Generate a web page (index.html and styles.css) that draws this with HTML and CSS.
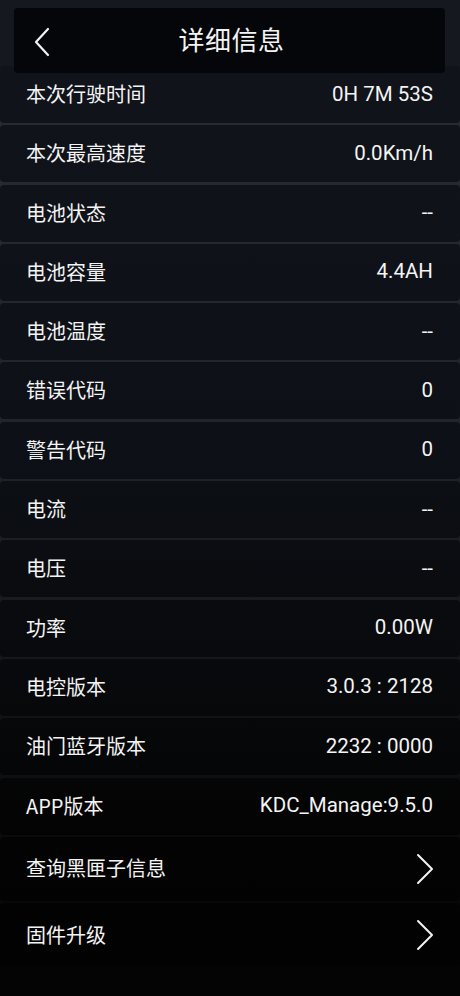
FILE: index.html
```html
<!DOCTYPE html>
<html lang="zh-CN">
<head>
    <meta charset="UTF-8">
    <meta name="viewport" content="width=device-width, initial-scale=1.0">
    <title>详细信息</title>
    <link rel="stylesheet" href="styles.css">
</head>
<body>

    <div class="topbar">
        <a class="back-btn" href="javascript:void(0);">
            <svg width="20" height="30" viewBox="0 0 20 30">
                <path d="M16 2 L4 15 L16 28" fill="none" stroke="#f2f2f2" stroke-width="2.2" stroke-linecap="round" stroke-linejoin="round"/>
            </svg>
        </a>
        <h1>详细信息</h1>
    </div>

    <div class="info-list">
        <div class="info-row"><span class="label">本次行驶时间</span><span class="value">0H 7M 53S</span></div>
        <div class="info-row"><span class="label">本次最高速度</span><span class="value">0.0Km/h</span></div>
        <div class="info-row"><span class="label">电池状态</span><span class="value">--</span></div>
        <div class="info-row"><span class="label">电池容量</span><span class="value">4.4AH</span></div>
        <div class="info-row"><span class="label">电池温度</span><span class="value">--</span></div>
        <div class="info-row"><span class="label">错误代码</span><span class="value">0</span></div>
        <div class="info-row"><span class="label">警告代码</span><span class="value">0</span></div>
        <div class="info-row"><span class="label">电流</span><span class="value">--</span></div>
        <div class="info-row"><span class="label">电压</span><span class="value">--</span></div>
        <div class="info-row"><span class="label">功率</span><span class="value">0.00W</span></div>
        <div class="info-row"><span class="label">电控版本</span><span class="value">3.0.3 : 2128</span></div>
        <div class="info-row"><span class="label">油门蓝牙版本</span><span class="value">2232 : 0000</span></div>
        <div class="info-row"><span class="label">APP版本</span><span class="value">KDC_Manage:9.5.0</span></div>

        <div class="info-row link-row">
            <span class="label">查询黑匣子信息</span>
            <svg class="arrow" width="20" height="32" viewBox="0 0 20 32">
                <path d="M3 2 L17 16 L3 30" fill="none" stroke="#f2f2f2" stroke-width="2" stroke-linecap="round" stroke-linejoin="round"/>
            </svg>
        </div>
        <div class="info-row link-row">
            <span class="label">固件升级</span>
            <svg class="arrow" width="20" height="32" viewBox="0 0 20 32">
                <path d="M3 2 L17 16 L3 30" fill="none" stroke="#f2f2f2" stroke-width="2" stroke-linecap="round" stroke-linejoin="round"/>
            </svg>
        </div>
    </div>

</body>
</html>
```

FILE: styles.css
```css
* {
    margin: 0;
    padding: 0;
    box-sizing: border-box;
}

html,
body {
    height: 100%;
}

body {
    color: #f4f4f4;
    font-family: "Noto Sans CJK SC", Roboto, sans-serif;
    background: linear-gradient(#15181e 0px, #15181e 74px, #272b33 80px, #20242b 45%, #121315 72%, #0b0b0c 84%, #040404 97%);
    background-attachment: fixed;
    position: relative;
    overflow: hidden;
}

/* header floats over the first row */
.topbar {
    position: absolute;
    top: 8px;
    left: 14px;
    width: 431px;
    height: 65px;
    background-color: #050609;
    border-radius: 4px;
    display: flex;
    align-items: center;
    justify-content: center;
    z-index: 2;
}

.back-btn {
    position: absolute;
    left: 18px;
    top: 19px;
    display: block;
    width: 20px;
    height: 30px;
}

.topbar h1 {
    font-size: 26px;
    font-weight: 400;
    letter-spacing: 0.5px;
    margin-left: 4px;
    margin-top: -4px;
}

.info-list {
    padding-top: 66px;
    display: flex;
    flex-direction: column;
    gap: 2.3px;
}

.info-row {
    height: 57px;
    padding: 0 27px 0 26px;
    display: flex;
    align-items: center;
    justify-content: space-between;
    background: linear-gradient(#11141b 0%, #0d1016 45%, #07080a 72%, #030303 84%, #020202 100%);
    background-attachment: fixed;
    border-radius: 4px;
}

.info-row .label {
    font-size: 20px;
    margin-top: -2px;
}

.info-row .value {
    font-family: Roboto, "Noto Sans CJK SC", sans-serif;
    font-size: 20.5px;
    margin-top: -2px;
}

.link-row {
    height: 64px;
    padding-right: 25px;
}

.arrow {
    display: block;
}
```
